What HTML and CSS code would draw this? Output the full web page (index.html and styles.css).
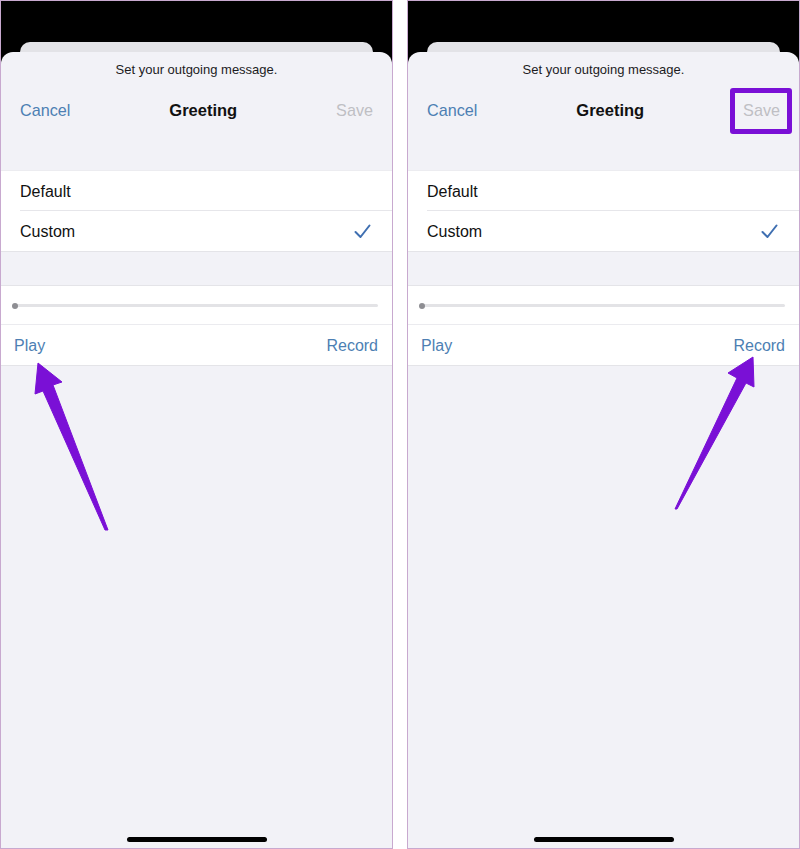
FILE: index.html
```html
<!DOCTYPE html>
<html>
<head>
<meta charset="utf-8">
<link rel="stylesheet" href="styles.css">
</head>
<body>
<div class="shots">
  <div class="panel">
    <div class="status"></div>
    <div class="backcard"></div>
    <div class="sheet">
      <div class="subtitle">Set your outgoing message.</div>
      <div class="nav">
        <span class="nav-btn">Cancel</span>
        <span class="nav-title">Greeting</span>
        <span class="nav-btn disabled">Save</span>
      </div>
      <div class="group">
        <div class="row"><span>Default</span></div>
        <div class="row last"><span>Custom</span>
          <svg class="check" width="17" height="15" viewBox="0 0 17 15"><path d="M1.5 8 L6.5 13 L15.5 1.5" fill="none" stroke="#3f6fb1" stroke-width="2" stroke-linecap="round" stroke-linejoin="round"/></svg>
        </div>
      </div>
      <div class="player">
        <div class="slider"><span class="knob"></span><span class="track"></span></div>
        <div class="actions"><span>Play</span><span>Record</span></div>
      </div>
      <div class="home"></div>
    </div>
    <svg class="arrow" width="393" height="849" viewBox="0 0 393 849"><polygon points="38,363 62,382 53,385 108,530 105,530 43,391 35,394" fill="#7a10d6" stroke="#7a10d6" stroke-width="1" stroke-linejoin="round"/></svg>
  </div>
  <div class="panel">
    <div class="status"></div>
    <div class="backcard"></div>
    <div class="sheet">
      <div class="subtitle">Set your outgoing message.</div>
      <div class="nav">
        <span class="nav-btn">Cancel</span>
        <span class="nav-title">Greeting</span>
        <span class="nav-btn disabled highlighted">Save</span>
      </div>
      <div class="group">
        <div class="row"><span>Default</span></div>
        <div class="row last"><span>Custom</span>
          <svg class="check" width="17" height="15" viewBox="0 0 17 15"><path d="M1.5 8 L6.5 13 L15.5 1.5" fill="none" stroke="#3f6fb1" stroke-width="2" stroke-linecap="round" stroke-linejoin="round"/></svg>
        </div>
      </div>
      <div class="player">
        <div class="slider"><span class="knob"></span><span class="track"></span></div>
        <div class="actions"><span>Play</span><span>Record</span></div>
      </div>
      <div class="home"></div>
    </div>
    <svg class="arrow" width="393" height="849" viewBox="0 0 393 849"><polygon points="346,357 347,387 339,383 270,509 268,509 330,378 321,373" fill="#7a10d6" stroke="#7a10d6" stroke-width="1" stroke-linejoin="round"/></svg>
  </div>
</div>
</body>
</html>
```

FILE: styles.css
```css
html, body {
  margin: 0;
  padding: 0;
  background: #ffffff;
}
body {
  font-family: "Liberation Sans", Arial, sans-serif;
  -webkit-font-smoothing: antialiased;
}
.shots {
  display: flex;
  gap: 14px;
  width: 800px;
  height: 849px;
}
.panel {
  position: relative;
  width: 393px;
  height: 849px;
  box-sizing: border-box;
  border: 1px solid #c8a9cf;
  background: #000;
  display: flex;
  flex-direction: column;
  overflow: hidden;
}
.status {
  height: 41px;
  flex: none;
}
.backcard {
  flex: none;
  height: 12px;
  margin: 0 19px -2px;
  background: #e3e3e7;
  border-radius: 10px 10px 0 0;
}
.sheet {
  flex: 1;
  background: #f2f2f7;
  border-radius: 12px 12px 0 0;
  display: flex;
  flex-direction: column;
}
.subtitle {
  padding-top: 9px;
  line-height: 18px;
  font-size: 13px;
  text-align: center;
  color: #1c1c1e;
}
.nav {
  margin-top: 9px;
  height: 44px;
  margin-bottom: 1px;
  padding: 0 19px;
  box-sizing: border-box;
  display: flex;
  align-items: center;
  justify-content: space-between;
  font-size: 16.2px;
}
.nav-btn {
  color: #4d7fb3;
  position: relative;
}
.nav-btn.disabled {
  color: #bfbfc4;
}
.nav-title {
  font-weight: bold;
  font-size: 16.5px;
  color: #111;
}
.highlighted::after {
  content: "";
  position: absolute;
  left: -13px;
  right: -12px;
  top: -13px;
  bottom: -14px;
  border: 5px solid #7a10d6;
  border-radius: 3px;
}
.group {
  margin-top: 37px;
  background: #fff;
  border-top: 1px solid #ececf0;
  border-bottom: 1px solid #e4e4e8;
}
.row {
  height: 40px;
  margin-left: 19px;
  padding: 2px 21px 0 0;
  box-sizing: border-box;
  display: flex;
  align-items: center;
  justify-content: space-between;
  font-size: 16px;
  color: #111;
  border-bottom: 1px solid #e6e6ea;
}
.row.last {
  height: 40px;
  border-bottom: none;
}
.row.last .check {
  margin-top: -2px;
}
.player {
  margin-top: 33px;
  background: #fff;
  border-top: 1px solid #e4e4e8;
  border-bottom: 1px solid #e4e4e8;
}
.slider {
  height: 39px;
  padding: 1px 14px 0 11px;
  box-sizing: border-box;
  display: flex;
  align-items: center;
  border-bottom: 1px solid #ebebef;
}
.knob {
  width: 6px;
  height: 6px;
  border-radius: 50%;
  background: #8e8e93;
  flex: none;
  position: relative;
  z-index: 1;
}
.track {
  flex: 1;
  height: 3px;
  margin-left: -2px;
  background: #e3e3e6;
  border-radius: 2px;
}
.actions {
  height: 40px;
  padding: 2px 14px 0 13px;
  box-sizing: border-box;
  display: flex;
  align-items: center;
  justify-content: space-between;
  font-size: 16px;
  color: #4d7fb3;
}
.home {
  margin: auto auto 6px;
  width: 140px;
  height: 5px;
  border-radius: 3px;
  background: #000;
}
.arrow {
  position: absolute;
  left: -1px;
  top: -1px;
  pointer-events: none;
}
```
